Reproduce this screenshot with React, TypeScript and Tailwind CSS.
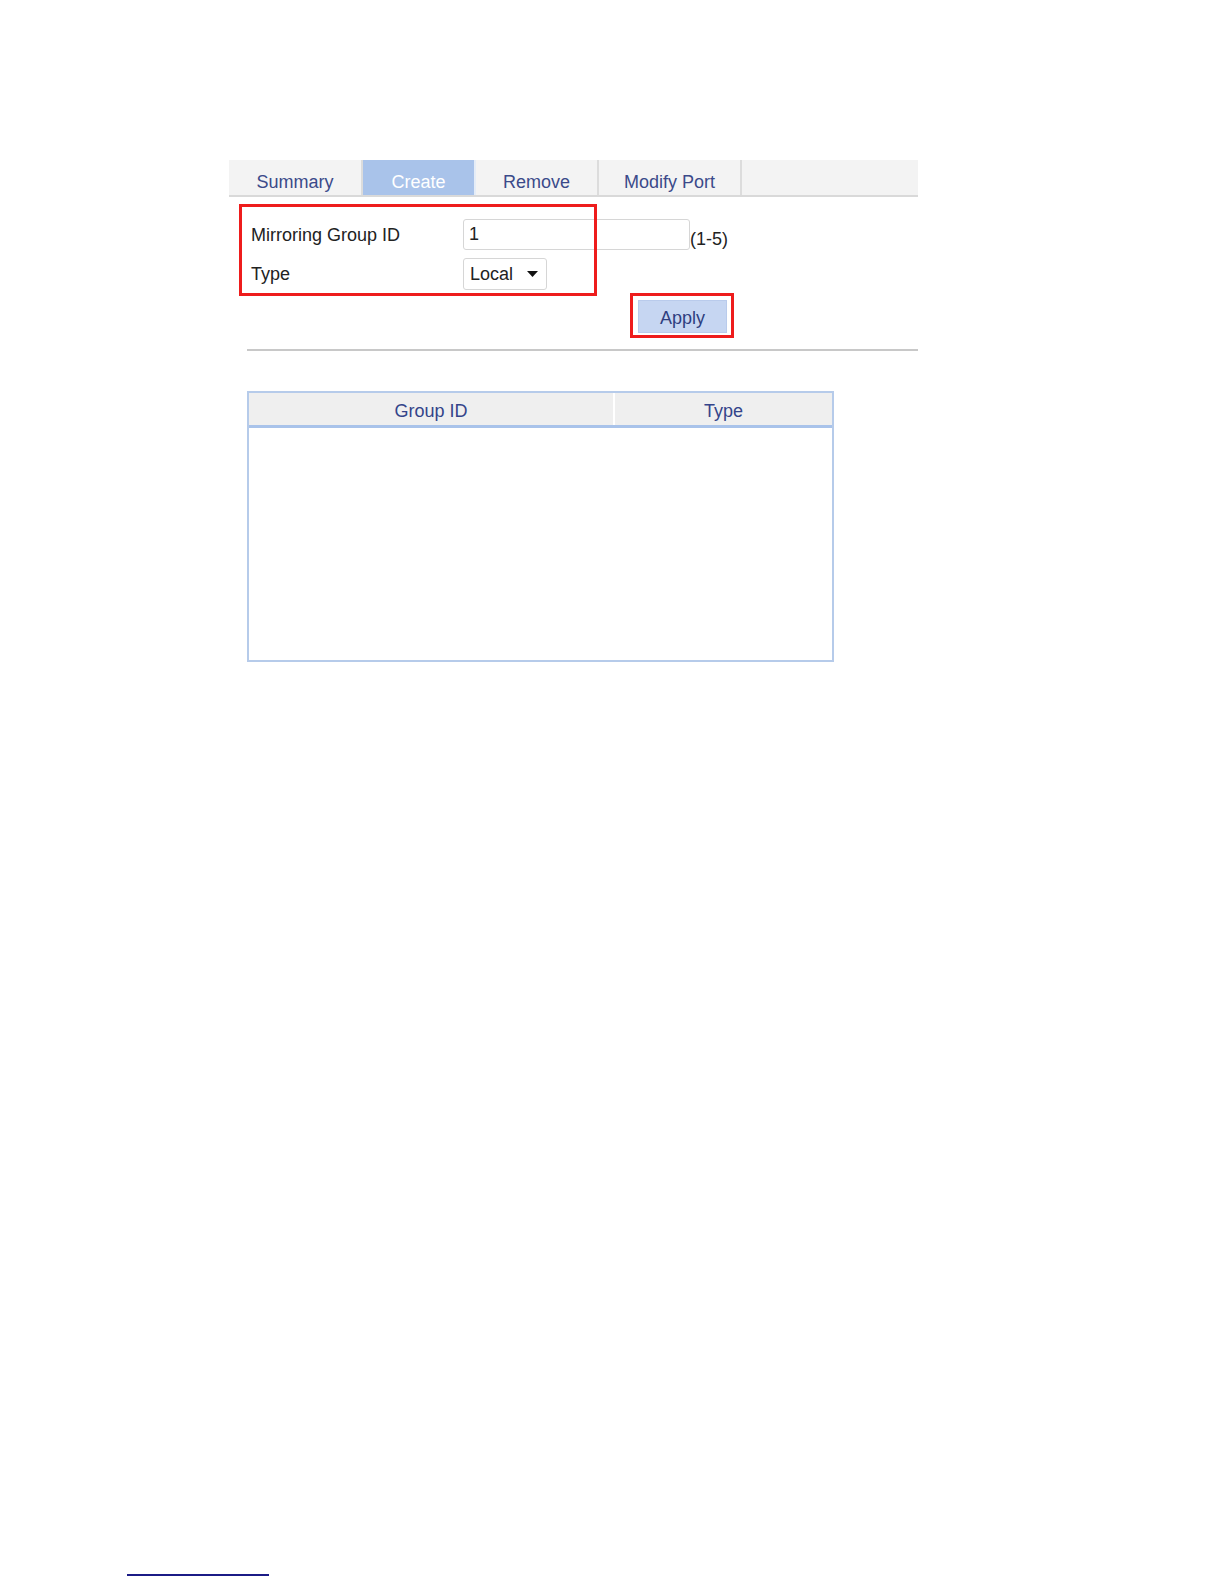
import React from 'react';

const tabs = [
  { label: 'Summary', width: 'w-[134px]', active: false },
  { label: 'Create', width: 'w-[113px]', active: true },
  { label: 'Remove', width: 'w-[123px]', active: false },
  { label: 'Modify Port', width: 'w-[143px]', active: false },
];

export default function App() {
  return (
    <div className="relative w-[1224px] h-[1584px] bg-white font-['Liberation_Sans',Arial,sans-serif] text-[18px] text-[#222]">
      <div className="w-[689px] ml-[229px] pt-[160px]">
        {/* Tabs */}
        <div className="flex h-[37px] bg-[#f3f3f3] border-b-2 border-[#d9d9d9]">
          {tabs.map((t) => (
            <div
              key={t.label}
              className={`${t.width} flex items-center justify-center pt-[9px] border-r-2 ${
                t.active ? 'bg-[#a9c3ea] text-white border-[#e4ecf7]' : 'text-[#3b4a8a] border-[#dcdcdc]'
              }`}
            >
              {t.label}
            </div>
          ))}
        </div>

        {/* Form */}
        <div className="relative">
          <div className="pt-[22px] pl-[22px]">
            <div className="flex items-center h-[31px]">
              <span className="w-[212px] pt-[2px]">Mirroring Group ID</span>
              <div className="w-[227px] h-[31px] border border-[#d6d6d6] rounded-[3px] flex items-center px-[5px]">1</div>
              <span className="pt-[10px]">(1-5)</span>
            </div>
            <div className="flex items-center h-[32px] mt-[8px]">
              <span className="w-[212px]">Type</span>
              <div className="w-[84px] h-[32px] border border-[#d6d6d6] rounded-[3px] flex items-center justify-between pl-[6px] pr-[8px]">
                <span>Local</span>
                <svg width="11" height="6" viewBox="0 0 11 6">
                  <path d="M0 0 H11 L5.5 6 Z" fill="#111" />
                </svg>
              </div>
            </div>
            <div className="pl-[387px] mt-[10px]">
              <button className="w-[89px] h-[33px] bg-[#c6d6f2] border border-[#b9cbec] text-[#2e3f80] pt-[3px]">Apply</button>
            </div>
          </div>
          {/* annotation boxes */}
          <div className="absolute left-[10px] top-[7px] w-[358px] h-[92px] border-[3px] border-[#ee1c1c]" />
          <div className="absolute left-[401px] top-[96px] w-[104px] h-[45px] border-[3px] border-[#ee1c1c]" />
        </div>

        <div className="mt-[16px] ml-[18px] h-[2px] bg-[#c8c8c8]" />

        {/* Table */}
        <div className="mt-[40px] ml-[18px] w-[587px] h-[271px] border-2 border-[#b6cbea]">
          <div className="flex h-[35px] bg-[#efefef] border-b-[3px] border-[#a9c3ea] text-[#34448a]">
            <div className="w-[366px] flex items-center justify-center pt-[5px] border-r-2 border-white">Group ID</div>
            <div className="flex-1 flex items-center justify-center pt-[5px]">Type</div>
          </div>
        </div>
      </div>

      <div className="mt-[912px] ml-[127px] w-[142px] h-[2px] bg-[#1b1b86]" />
    </div>
  );
}
